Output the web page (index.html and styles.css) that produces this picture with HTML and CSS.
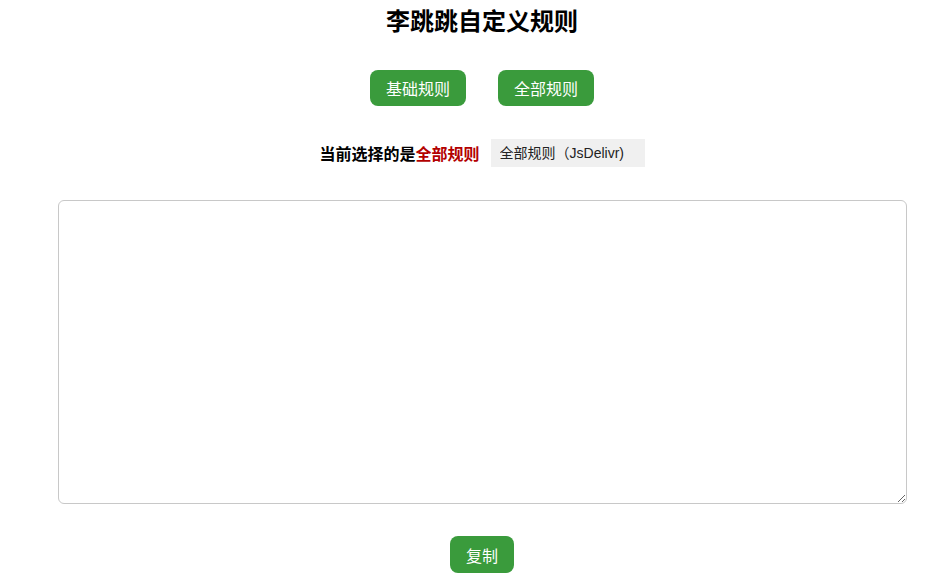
FILE: index.html
```html
<!DOCTYPE html>
<html lang="zh">
<head>
<meta charset="utf-8">
<title>李跳跳自定义规则</title>
<link rel="stylesheet" href="styles.css">
</head>
<body>
<div class="page">
  <h1 class="title">李跳跳自定义规则</h1>
  <div class="choices">
    <button class="btn">基础规则</button>
    <button class="btn">全部规则</button>
  </div>
  <div class="current">
    <span class="label">当前选择的是<span class="hl">全部规则</span></span>
    <select class="source">
      <option>全部规则（JsDelivr)</option>
    </select>
  </div>
  <textarea class="rules"></textarea>
  <div class="actions">
    <button class="btn btn-copy">复制</button>
  </div>
</div>
</body>
</html>
```
FILE: styles.css
```css
html, body {
  margin: 0;
  padding: 0;
  background: #fff;
}
body {
  font-family: "Noto Sans CJK SC", "Liberation Sans", sans-serif;
  color: #000;
}
.page {
  padding: 0 0 0 32px;
  display: flex;
  flex-direction: column;
  align-items: center;
}
.title {
  margin: 4px 0 0;
  font-size: 24px;
  line-height: 32px;
  font-weight: 700;
}
.choices {
  margin-top: 34px;
  display: flex;
  gap: 32px;
}
.btn {
  font-family: "Noto Sans CJK SC", "Liberation Sans", sans-serif;
  background: #3a9b3c;
  color: #fff;
  border: none;
  border-radius: 8px;
  width: 96px;
  height: 36px;
  font-size: 16px;
  padding: 0;
  cursor: pointer;
}
.current {
  margin-top: 33px;
  display: flex;
  align-items: center;
  gap: 11px;
}
.label {
  font-size: 16px;
  font-weight: 700;
}
.hl {
  color: #b30000;
}
.source {
  appearance: none;
  -webkit-appearance: none;
  background: #f0f0f0;
  border: none;
  border-radius: 0;
  height: 28px;
  width: 154px;
  padding: 0 9px;
  font-family: "Liberation Sans", "Noto Sans CJK SC", sans-serif;
  font-size: 14px;
  color: #222;
}
.rules {
  margin-top: 33px;
  width: 849px;
  height: 304px;
  box-sizing: border-box;
  border: 1px solid #c8c8c8;
  border-radius: 6px;
  margin-left: 1px;
  padding: 6px;
  font-size: 14px;
  resize: both;
}
.actions {
  margin-top: 32px;
}
.btn-copy {
  width: 64px;
  height: 37px;
}
```
